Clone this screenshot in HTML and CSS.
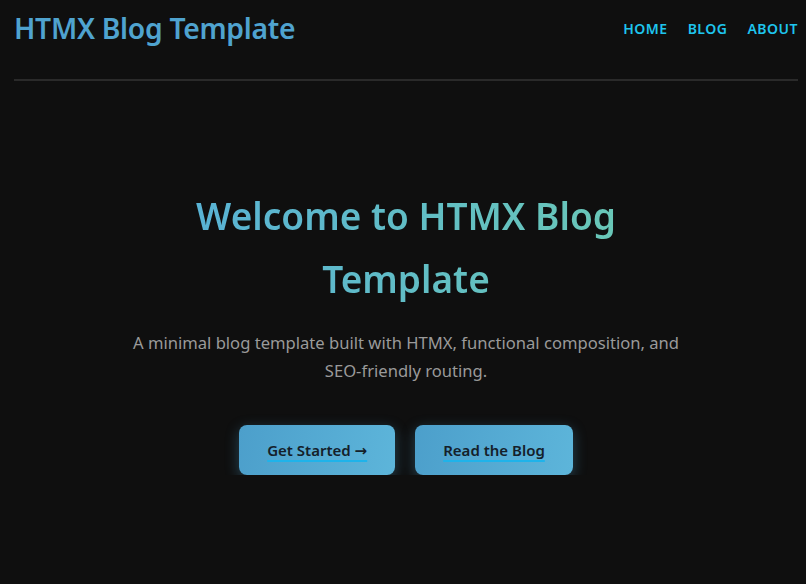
FILE: index.html
```html
<!DOCTYPE html>
<html lang="en">
<head>
<meta charset="utf-8">
<title>HTMX Blog Template</title>
<link rel="stylesheet" href="styles.css">
</head>
<body>
<div class="page">
  <header class="site-header">
    <a class="brand" href="#">HTMX Blog Template</a>
    <nav class="nav">
      <a href="#">Home</a>
      <a href="#">Blog</a>
      <a href="#">About</a>
    </nav>
  </header>
  <main class="hero">
    <h1 class="hero-title">Welcome to HTMX Blog Template</h1>
    <p class="hero-text">A minimal blog template built with HTMX, functional composition, and SEO-friendly routing.</p>
    <div class="actions">
      <a class="btn" href="#"><span>Get Started →</span></a>
      <a class="btn" href="#"><span>Read the Blog</span></a>
    </div>
  </main>
</div>
</body>
</html>
```

FILE: styles.css
```css
html, body {
  margin: 0;
  padding: 0;
  background: #0f0f0f;
}
body {
  font-family: "Noto Sans", "DejaVu Sans", sans-serif;
  color: #9a9a9a;
}
.page {
  padding: 0 8px 0 14px;
}
.site-header {
  display: flex;
  justify-content: space-between;
  align-items: center;
  height: 56px;
  border-bottom: 2px solid #2a2a2a;
  padding-bottom: 23px;
}
.brand {
  font-size: 28.3px;
  font-weight: 600;
  color: #4fa3cf;
  text-decoration: none;
  letter-spacing: -0.3px;
}
.nav {
  display: flex;
  gap: 20px;
}
.nav a {
  color: #1ec5ee;
  text-decoration: none;
  text-transform: uppercase;
  font-size: 14px;
  font-weight: 600;
  letter-spacing: 0.5px;
}
.hero {
  display: flex;
  flex-direction: column;
  align-items: center;
  text-align: center;
  padding-top: 103px;
}
.hero-title {
  margin: 0;
  font-size: 37px;
  font-weight: 600;
  line-height: 63px;
  max-width: 460px;
  background: linear-gradient(90deg, #58b2d6, #6ac8b6);
  -webkit-background-clip: text;
  background-clip: text;
  color: transparent;
}
.hero-text {
  margin: 19px 0 0;
  max-width: 570px;
  font-size: 16.6px;
  line-height: 28px;
  color: #9a9a9a;
}
.actions {
  display: flex;
  gap: 20px;
  margin-top: 40px;
}
.btn {
  display: flex;
  align-items: center;
  justify-content: center;
  height: 50px;
  padding: 0 28px;
  border-radius: 8px;
  background: linear-gradient(100deg, #4c9fcb, #5db5da);
  box-shadow: 0 4px 14px rgba(80, 170, 215, 0.35);
  text-decoration: none;
  font-size: 15px;
  font-weight: 600;
}
.btn span {
  color: #14202a;
  text-decoration: underline;
  text-decoration-color: #1fb3ea;
  text-underline-offset: 4px;
  text-decoration-thickness: 2px;
}
```
